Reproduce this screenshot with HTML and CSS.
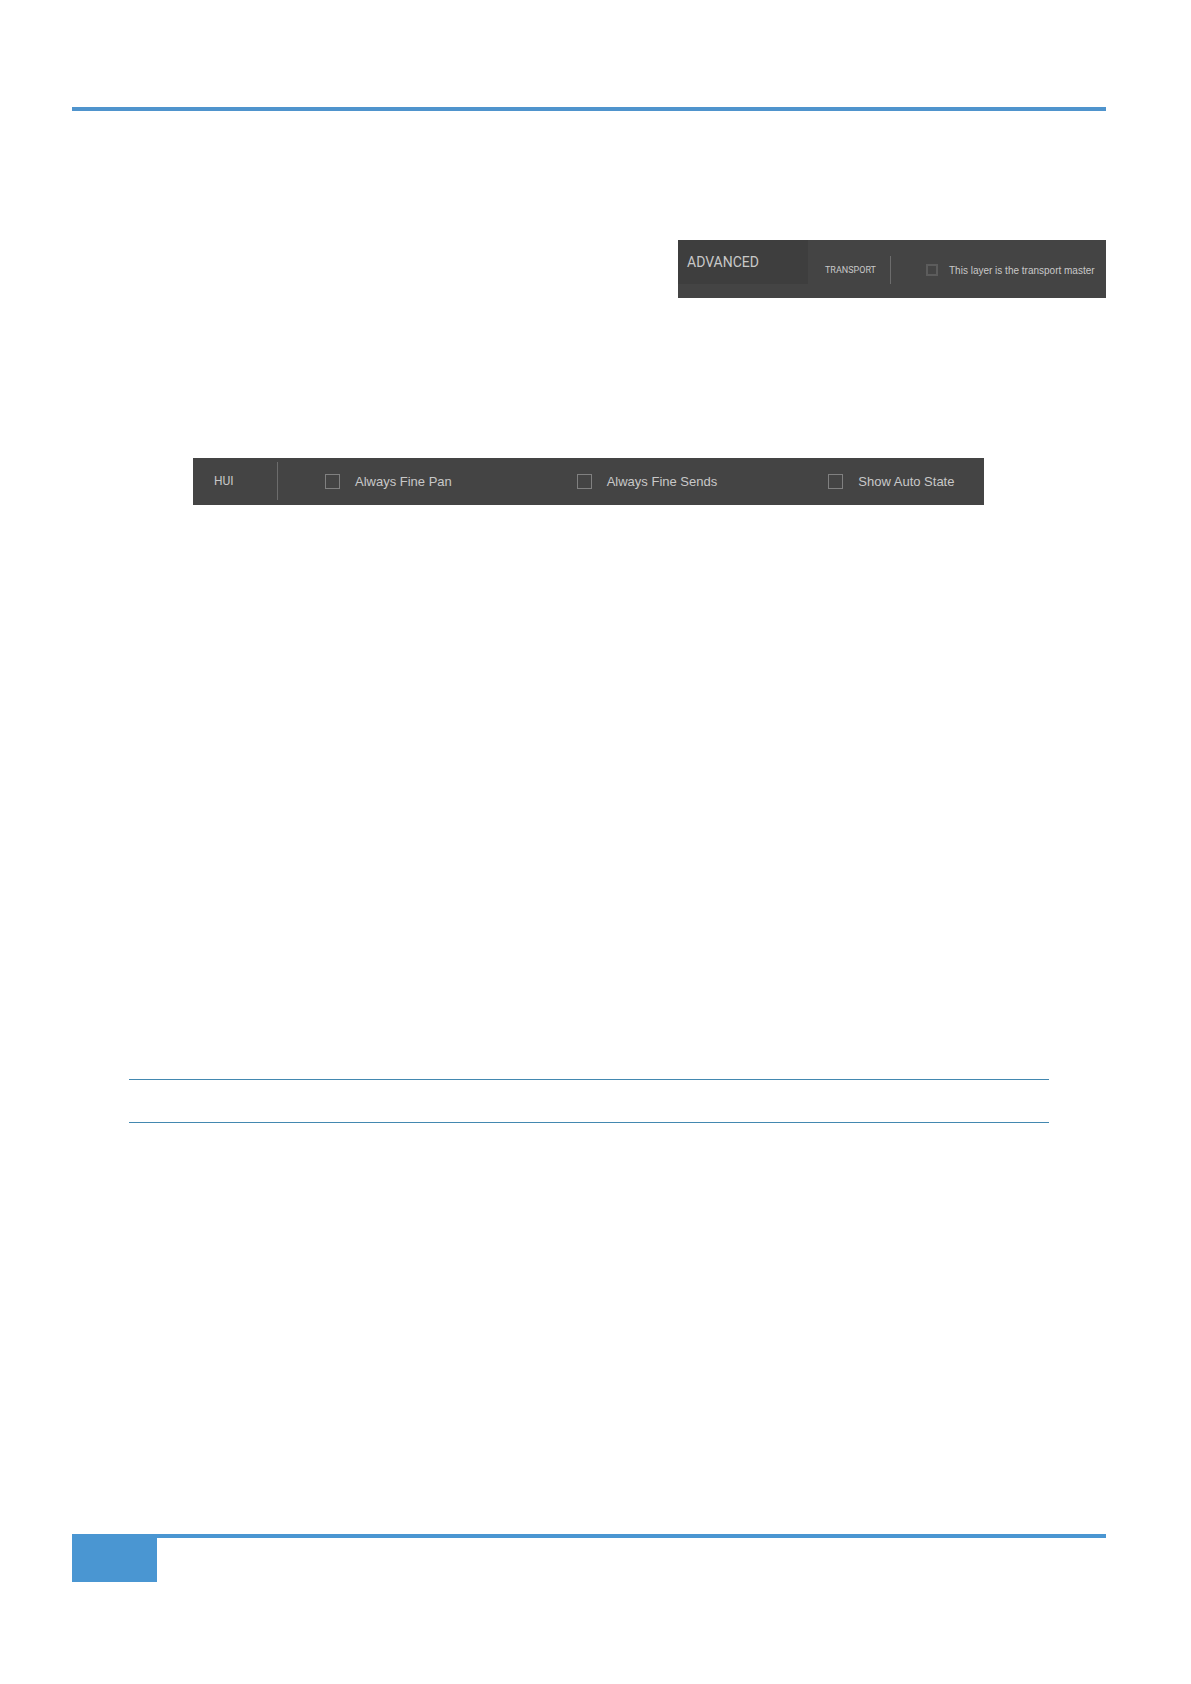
FILE: index.html
```
<!DOCTYPE html>
<html lang="en">
<head>
    <meta charset="UTF-8">
    <meta name="viewport" content="width=device-width, initial-scale=1.0">
    <title>Advanced Settings</title>
    <link rel="stylesheet" href="styles.css">
</head>
<body>
    <div class="page">
        <header class="page-header"></header>
        <main class="content">
            <section class="panel advanced">
                <h2 class="panel-title">ADVANCED</h2>
                <div class="transport">
                    <h3 class="group-name transport-name">TRANSPORT</h3>
                    <label class="option small">
                        <input type="checkbox" class="box">
                        <span>This layer is the transport master</span>
                    </label>
                </div>
            </section>
            <section class="panel hui">
                <h3 class="group-name hui-name">HUI</h3>
                <div class="options">
                    <label class="option">
                        <input type="checkbox" class="box">
                        <span>Always Fine Pan</span>
                    </label>
                    <label class="option">
                        <input type="checkbox" class="box">
                        <span>Always Fine Sends</span>
                    </label>
                    <label class="option">
                        <input type="checkbox" class="box">
                        <span>Show Auto State</span>
                    </label>
                </div>
            </section>
            <div class="note"></div>
        </main>
        <footer class="page-footer">
            <div class="page-tab"></div>
        </footer>
    </div>
</body>
</html>
```
FILE: styles.css
```
* {
    box-sizing: border-box;
}
body {
    font-family: "Liberation Sans", Arial, sans-serif;
    background-color: #fff;
    margin: 0;
    padding: 0;
}
.page {
    display: flex;
    flex-direction: column;
    min-height: 100vh;
    padding: 107px 85px 102px 72px;
}
.page-header {
    border-top: 4px solid #4f94cd;
}
.content {
    display: flex;
    flex-direction: column;
    flex: 1;
    padding-top: 129px;
}
.panel {
    display: flex;
    background-color: #444;
    color: #c8c8c8;
}
.panel-title {
    width: 130px;
    height: 44px;
    margin: 0;
    padding: 12px 9px;
    background-color: #3e3e3e;
    font-family: Roboto, sans-serif;
    font-size: 14px;
    font-weight: 400;
    line-height: 20px;
}
.group-name {
    display: flex;
    align-items: center;
    margin: 0;
    border-right: 1px solid #6c6c6c;
    font-family: Roboto, sans-serif;
    font-weight: 400;
}
.advanced {
    align-self: flex-end;
    width: 428px;
    padding-bottom: 14px;
}
.transport {
    display: flex;
    padding: 16px 0 0 17px;
}
.transport-name {
    width: 66px;
    font-size: 9px;
}
.hui {
    margin: 160px 122px 0 121px;
    padding: 4px 0 5px 21px;
}
.hui-name {
    width: 64px;
    height: 38px;
    font-size: 12px;
}
.options {
    display: grid;
    grid-template-columns: repeat(3, 1fr);
    flex: 1;
    padding-left: 47px;
    margin-right: -96px;
}
.option {
    display: flex;
    align-items: center;
    gap: 15px;
    font-size: 13px;
    white-space: nowrap;
}
.option.small {
    gap: 11px;
    padding-left: 35px;
    font-size: 10px;
}
.box {
    appearance: none;
    width: 15px;
    height: 15px;
    margin: 0;
    border: 1px solid #808080;
}
.small .box {
    width: 12px;
    height: 12px;
    border: 2px solid #5c5c5c;
}
.note {
    height: 44px;
    margin: 574px 57px 0;
    border-top: 1px solid #4388b0;
    border-bottom: 1px solid #4388b0;
}
.page-footer {
    border-top: 4px solid #4a96d2;
}
.page-tab {
    width: 85px;
    height: 44px;
    background-color: #4a96d2;
}
```
